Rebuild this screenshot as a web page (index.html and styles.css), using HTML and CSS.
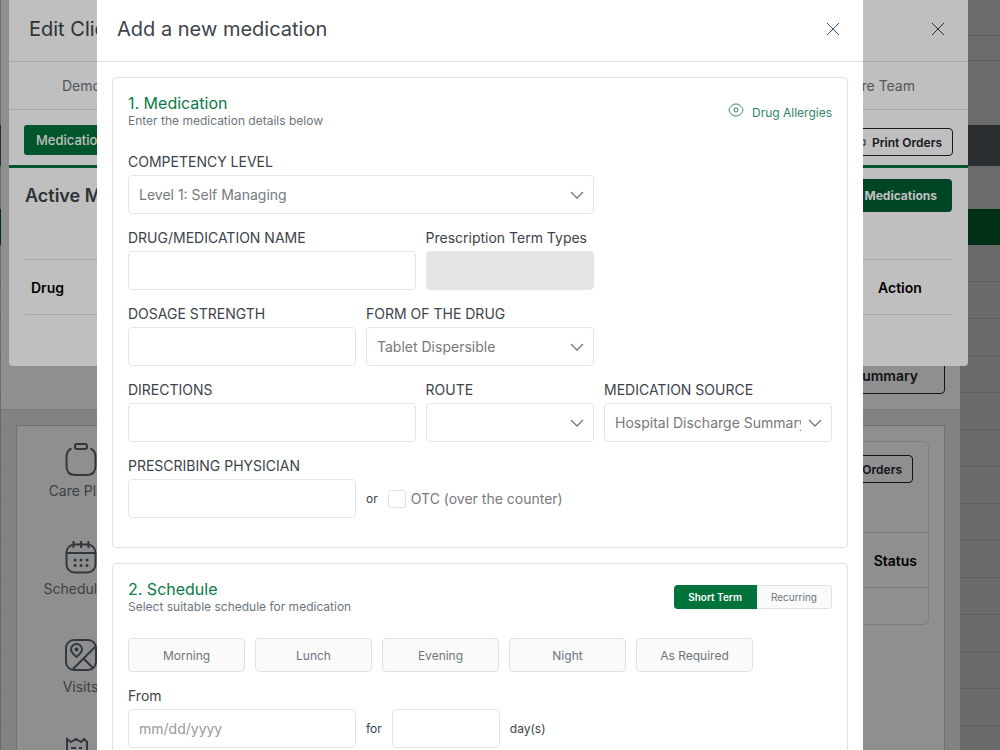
FILE: index.html
```html
<!DOCTYPE html>
<html lang="en">
<head>
  <meta charset="UTF-8">
  <title>Add a new medication</title>
  <meta name="viewport" content="width=device-width, initial-scale=1.0">
  <link rel="stylesheet" href="styles.css">
</head>
<body>

  <!-- Client list -->
  <div class="list-page">
    <div class="list-top"></div>
    <div class="list-filter"></div>
    <div class="list-search"></div>
    <div class="list-nav"></div>
    <div class="list-space"></div>
    <div class="list-head"></div>
    <div class="list-rows"></div>
  </div>
  <div class="backdrop"></div>

  <!-- Client profile -->
  <section class="profile">
    <div class="profile-top">
      <button class="outline-btn summary-btn" type="button">Summary</button>
    </div>
    <div class="profile-body">
      <div class="profile-panel">
        <nav class="side-nav">
          <a href="#care-plan">
            <svg viewBox="0 0 32 32"><path d="M6.500 5.500C3 7 1.500 9.500 1.500 14v9c0 6 3 9 9 9h11c6 0 9-3 9-9v-9c0-4.500-1.500-7-5-8.500"/><rect x="10" y="1" width="12" height="5" rx="2"/></svg>
            Care Plan
          </a>
          <a href="#schedule">
            <svg viewBox="0 0 32 32"><rect x="1.500" y="3.500" width="29" height="28" rx="8"/><path d="M2 12h28M8.500 0v7M16 0v7M23.500 0v7"/><path class="dots" d="M10 19h.1M16 19h.1M22 19h.1M10 24.500h.1M16 24.500h.1M22 24.500h.1"/></svg>
            Scheduling
          </a>
          <a href="#visits">
            <svg viewBox="0 0 32 32"><rect x="1" y="1" width="30" height="30" rx="8"/><path d="M11.500 18c-3.500-3-5.500-5-5.500-7.500a5.500 5.500 0 0 1 11 0c0 2.500-2 4.500-5.500 7.500zM8 30L30 8M19 20l9 9"/><circle cx="11.500" cy="10.500" r="1"/></svg>
            Visits
          </a>
          <a href="#invoices" aria-label="Invoices">
            <svg viewBox="0 0 32 32"><path d="M2 32V2l4 3 5-3 5 3 3-3 3 3V32M6 11h5M14 11h3M6 18h11"/></svg>
          </a>
        </nav>
        <div class="orders-card">
          <div class="orders-bar">
            <button class="outline-btn" type="button">Print Orders</button>
          </div>
          <table>
            <thead><tr><th>Status</th></tr></thead>
            <tbody><tr><td></td></tr></tbody>
          </table>
        </div>
      </div>
    </div>
  </section>
  <div class="backdrop"></div>

  <!-- Edit client modal -->
  <section class="modal edit-modal">
    <header class="modal-header">
      <h2>Edit Client</h2>
      <button class="close" type="button" aria-label="Close">
        <svg viewBox="0 0 14 14"><path d="M1 1l12 12M13 1L1 13"/></svg>
      </button>
    </header>
    <nav class="tabs">
      <a href="#demographics">Demographics</a>
      <a href="#care-team">Care Team</a>
    </nav>
    <div class="sub-tabs">
      <button class="tab-btn" type="button">Medications</button>
      <button class="outline-btn" type="button">
        <svg viewBox="0 0 14 14"><path d="M4 5V1h6v4M4 10H1V5h12v5h-3M4 8h6v5H4z"/></svg>
        Print Orders
      </button>
    </div>
    <div class="active-meds">
      <div class="active-head">
        <h3>Active Medications</h3>
        <button class="add-btn" type="button">Add Medications</button>
      </div>
      <table>
        <thead><tr><th>Drug</th><th class="action">Action</th></tr></thead>
        <tbody><tr><td colspan="2"></td></tr></tbody>
      </table>
    </div>
  </section>
  <div class="backdrop"></div>

  <!-- Add medication modal -->
  <section class="modal med-modal">
    <header class="modal-header">
      <h1>Add a new medication</h1>
      <button class="close" type="button" aria-label="Close">
        <svg viewBox="0 0 14 14"><path d="M1 1l12 12M13 1L1 13"/></svg>
      </button>
    </header>

    <form class="med-form">
      <div class="card">
        <div class="card-head">
          <div>
            <h2>1. Medication</h2>
            <p>Enter the medication details below</p>
          </div>
          <a class="allergies" href="#allergies">
            <svg viewBox="0 0 16 14"><path d="M1 7C3 -1 13 -1 15 7C13 15 3 15 1 7z"/><circle cx="8" cy="7" r="2"/></svg>
            <span>Drug Allergies</span>
          </a>
        </div>

        <div class="fields">
          <div class="field span-8">
            <label for="level">COMPETENCY LEVEL</label>
            <select id="level"><option>Level 1: Self Managing</option></select>
          </div>
          <div class="field span-5 first">
            <label for="drug">DRUG/MEDICATION NAME</label>
            <input type="text" id="drug">
          </div>
          <div class="field span-3">
            <label for="term">Prescription Term Types</label>
            <input type="text" id="term" disabled>
          </div>
          <div class="field span-4 first">
            <label for="strength">DOSAGE STRENGTH</label>
            <input type="text" id="strength">
          </div>
          <div class="field span-4">
            <label for="form">FORM OF THE DRUG</label>
            <select id="form"><option>Tablet Dispersible</option></select>
          </div>
          <div class="field span-5 first">
            <label for="directions">DIRECTIONS</label>
            <input type="text" id="directions">
          </div>
          <div class="field span-3">
            <label for="route">ROUTE</label>
            <select id="route"><option></option></select>
          </div>
          <div class="field span-4">
            <label for="source">MEDICATION SOURCE</label>
            <select id="source"><option>Hospital Discharge Summary</option></select>
          </div>
          <div class="field span-4 first">
            <label for="physician">PRESCRIBING PHYSICIAN</label>
            <input type="text" id="physician">
          </div>
          <div class="inline-row span-8">
            <span>or</span>
            <label class="check" for="otc"><input type="checkbox" id="otc">OTC (over the counter)</label>
          </div>
        </div>
      </div>

      <div class="card">
        <div class="card-head">
          <div>
            <h2>2. Schedule</h2>
            <p>Select suitable schedule for medication</p>
          </div>
          <div class="toggle">
            <button class="on" type="button">Short Term</button>
            <button type="button">Recurring</button>
          </div>
        </div>

        <div class="times">
          <button type="button">Morning</button>
          <button type="button">Lunch</button>
          <button type="button">Evening</button>
          <button type="button">Night</button>
          <button type="button">As Required</button>
        </div>

        <div class="fields">
          <div class="field span-4">
            <label for="from">From</label>
            <input type="text" id="from" placeholder="mm/dd/yyyy">
          </div>
          <div class="inline-row span-8">
            <label for="days">for</label>
            <input class="days" type="text" id="days">
            <span>day(s)</span>
          </div>
        </div>
      </div>
    </form>
  </section>

</body>
</html>
```

FILE: styles.css
```css
* {
  box-sizing: border-box;
}

body {
  margin: 0;
  height: 100vh;
  overflow: hidden;
  font-family: Inter, sans-serif;
  font-size: 14px;
  color: #3d434a;
  background-color: #fff;
}

h1, h2, h3, p {
  margin: 0;
}

a {
  text-decoration: none;
}

button, input, select {
  font-family: inherit;
}

svg {
  fill: none;
  stroke: currentColor;
}

table {
  width: 100%;
  border-collapse: collapse;
}

th {
  height: 55px;
  padding: 0 6px;
  text-align: left;
  font-size: 14px;
  font-weight: 600;
  color: #000;
}

.backdrop {
  position: fixed;
  inset: 0;
  background-color: rgba(0, 0, 0, 0.25);
}

/* Client list */
.list-page {
  display: flex;
  flex-direction: column;
  height: 100vh;
}

.list-top {
  height: 36px;
  border-bottom: 1px solid #dcdcdc;
}

.list-filter {
  height: 25px;
  border-bottom: 1px solid #dcdcdc;
}

.list-search {
  height: 64px;
}

.list-nav {
  height: 41px;
  background-color: #646c74;
}

.list-space {
  height: 43px;
}

.list-head {
  height: 36px;
  background-color: #00733a;
}

.list-rows {
  flex: 1;
  background: repeating-linear-gradient(#fdfdfd 0 36px, #e2e2e2 36px 37px);
}

/* Client profile */
.profile {
  position: fixed;
  inset: 0 40px 0 1px;
  display: flex;
  flex-direction: column;
  background-color: #fff;
}

.profile-top {
  flex: none;
  display: flex;
  align-items: flex-end;
  justify-content: flex-end;
  height: 410px;
  padding: 15px;
  border-bottom: 1px solid #d5d8e0;
}

.outline-btn {
  display: flex;
  align-items: center;
  gap: 6px;
  height: 28px;
  padding: 0 10px;
  font-size: 12px;
  font-weight: 600;
  color: #212529;
  background: none;
  border: 1px solid #212510;
  border-radius: 4px;
}

.outline-btn svg {
  width: 14px;
  height: 14px;
}

.summary-btn {
  height: 38px;
  padding: 0 26px;
  font-size: 14px;
}

.profile-body {
  flex: 1;
  display: flex;
  padding: 15px 15px 0;
  background-color: #e8e8e8;
}

.profile-panel {
  flex: 1;
  display: flex;
  justify-content: space-between;
  padding: 15px 15px 0 0;
  background-color: #fff;
  border: 1px solid #c8cbd4;
}

.side-nav {
  display: flex;
  flex-direction: column;
  gap: 40px;
  width: 127px;
  padding-top: 2px;
}

.side-nav a {
  display: flex;
  flex-direction: column;
  align-items: center;
  gap: 6px;
  line-height: 20px;
  color: #6c757d;
}

.side-nav svg {
  width: 32px;
  height: 32px;
  overflow: visible;
  color: #5a6470;
  stroke-width: 2;
}

.side-nav .dots {
  stroke-width: 3;
  stroke-linecap: round;
}

.orders-card {
  width: 500px;
  height: 184px;
  border: 1px solid #dee2e6;
  border-radius: 6px;
}

.orders-bar {
  display: flex;
  justify-content: flex-end;
  height: 90px;
  padding: 13px 15px;
}

.orders-card th {
  padding-right: 11px;
  text-align: right;
  border-top: 1px solid #dee2e6;
  border-bottom: 1px solid #dee2e6;
}

/* Modals */
.modal {
  position: fixed;
  top: 0;
  background-color: #fff;
}

.modal-header {
  display: flex;
  align-items: center;
  justify-content: space-between;
  height: 62px;
  padding: 0 20px 3px;
  border-bottom: 1px solid #dee2e6;
}

.modal-header h1, .modal-header h2 {
  font-size: 20px;
  font-weight: 400;
  line-height: 24px;
}

.close {
  display: flex;
  padding: 3px;
  color: #343a40;
  background: none;
  border: none;
}

.close svg {
  width: 14px;
  height: 14px;
}

/* Edit client */
.edit-modal {
  left: 9px;
  right: 32px;
  border-radius: 0 0 4px 4px;
}

.tabs {
  display: flex;
  align-items: center;
  justify-content: space-between;
  height: 48px;
  padding: 0 53px;
  border-bottom: 1px solid #dee2e6;
}

.tabs a {
  color: #6c757d;
}

.sub-tabs {
  display: flex;
  justify-content: space-between;
  align-items: flex-start;
  height: 58px;
  padding: 15px 15px 0;
  border-bottom: 3px solid #00733a;
}

.sub-tabs .outline-btn {
  margin-top: 3px;
}

.tab-btn {
  height: 30px;
  padding: 0 12px;
  font-size: 13px;
  font-weight: 500;
  color: #fff;
  background-color: #00733a;
  border: none;
  border-radius: 3px;
}

.active-meds {
  padding: 11px 16px 0;
}

.active-head {
  display: flex;
  justify-content: space-between;
  height: 80px;
}

.active-head h3 {
  font-size: 18px;
  font-weight: 600;
  line-height: 33px;
}

.add-btn {
  height: 33px;
  padding: 0 15px;
  font-size: 12px;
  font-weight: 700;
  color: #fff;
  background-color: #005e33;
  border: none;
  border-radius: 4px;
}

.active-meds th {
  border-top: 1px solid #dee2e6;
  border-bottom: 1px solid #dee2e6;
}

.active-meds .action {
  width: 80px;
}

.active-meds td {
  height: 51px;
}

/* Add medication */
.med-modal {
  left: 97px;
  right: 137px;
  bottom: 0;
  overflow: hidden;
}

.med-modal .close {
  color: #34506a;
}

.med-form {
  display: flex;
  flex-direction: column;
  gap: 15px;
  padding: 15px;
}

.card {
  padding: 15px 15px 29px;
  border: 1px solid #dee2e6;
  border-radius: 4px;
}

.card-head {
  display: flex;
  justify-content: space-between;
  margin-bottom: 24px;
}

.card-head h2 {
  font-size: 16px;
  font-weight: 400;
  line-height: 20px;
  color: #0b7a46;
}

.card-head p {
  font-size: 12px;
  line-height: 15px;
  color: #6c757d;
}

.allergies {
  display: flex;
  gap: 8px;
  padding-top: 10px;
  font-size: 12px;
  line-height: 20px;
  color: #2e8560;
}

.allergies svg {
  width: 16px;
  height: 14px;
}

.fields {
  display: grid;
  grid-template-columns: repeat(12, 1fr);
  gap: 14px 10px;
}

.span-3 {
  grid-column-end: span 3;
}

.span-4 {
  grid-column-end: span 4;
}

.span-5 {
  grid-column-end: span 5;
}

.span-8 {
  grid-column-end: span 8;
}

.first {
  grid-column-start: 1;
}

.field {
  display: flex;
  flex-direction: column;
  gap: 3px;
  min-width: 0;
  line-height: 20px;
}

.med-form input[type="text"], .med-form select {
  width: 100%;
  height: 39px;
  padding: 0 10px;
  font-size: 14px;
  color: #77797c;
  background-color: #fff;
  border: 1px solid #e3e6e8;
  border-radius: 4px;
}

.med-form select {
  appearance: none;
  padding-right: 30px;
  background-image: url("data:image/svg+xml,%3Csvg xmlns='http://www.w3.org/2000/svg' viewBox='0 0 14 8'%3E%3Cpath d='M1 1l6 6 6-6' fill='none' stroke='%23777' stroke-width='1.300'/%3E%3C/svg%3E");
  background-repeat: no-repeat;
  background-position: right 9px center;
  background-size: 14px 8px;
}

.med-form input[type="text"]:disabled {
  background-color: #e4e4e4;
}

.med-form input::placeholder {
  color: #999;
}

.inline-row {
  display: flex;
  align-items: center;
  align-self: end;
  gap: 10px;
  height: 39px;
  font-size: 12px;
}

.check {
  display: flex;
  align-items: center;
  gap: 5px;
  font-size: 14px;
  color: #77797c;
}

.check input {
  appearance: none;
  width: 18px;
  height: 18px;
  margin: 0;
  border: 1px solid #dee2e6;
  border-radius: 3px;
}

.med-form input.days[type="text"] {
  width: 108px;
}

.toggle {
  display: flex;
  align-self: flex-start;
  margin-top: 6px;
}

.toggle button {
  height: 24px;
  padding: 0 14px;
  font-size: 10px;
  color: #6c757d;
  background-color: #fafafa;
  border: 1px solid #dee2e6;
  border-left: none;
  border-radius: 0 4px 4px 0;
}

.toggle .on {
  font-weight: 600;
  color: #fff;
  background-color: #00733a;
  border-color: #00733a;
  border-radius: 4px 0 0 4px;
}

.times {
  display: flex;
  gap: 10px;
  margin-bottom: 14px;
}

.times button {
  width: 117px;
  height: 34px;
  font-size: 12px;
  color: #6c757d;
  background-color: #fafafa;
  border: 1px solid #dee2e6;
  border-radius: 4px;
}
```
